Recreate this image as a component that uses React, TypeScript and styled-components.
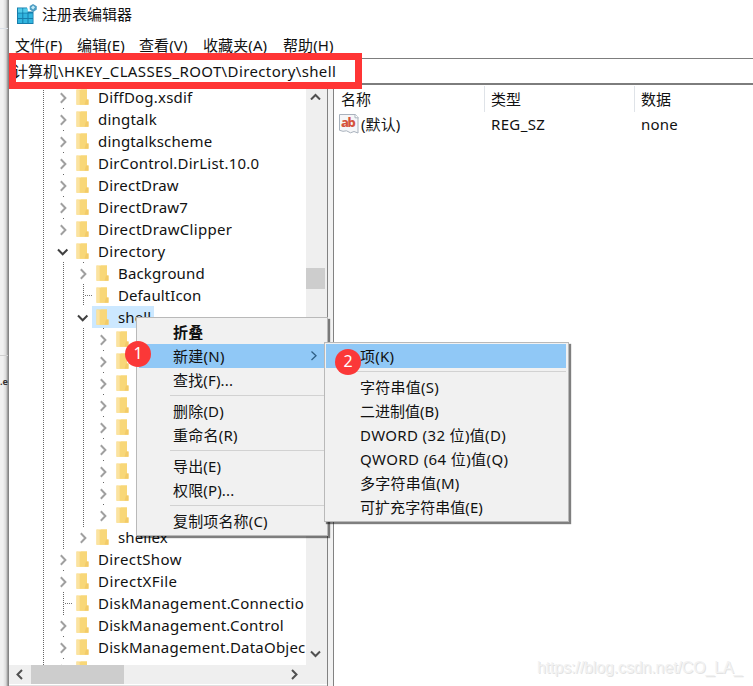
import React from 'react';
import styled, { createGlobalStyle, css } from 'styled-components';

const Global = createGlobalStyle`
  * { box-sizing: border-box; }
  body { margin: 0; background: #fff; overflow: hidden; }
`;

const Screen = styled.div`
  position: relative;
  display: flex;
  width: 753px;
  height: 686px;
  overflow: hidden;
  background: #fff;
  color: #111;
  font: 15px/22px 'Noto Sans', 'Noto Sans CJK SC', sans-serif;
  white-space: pre;
`;

const Backdrop = styled.div`
  width: 9px;
  flex: none;
  display: flex;
  flex-direction: column;
  border-right: 1px solid #858585;
  background: linear-gradient(90deg, #f1f1f1 3px, #d9d9d9 6px, #8d8d8d 8px);
`;
const BackdropCap = styled.div`
  height: 29px;
  border-bottom: 1px solid #dadfe6;
`;
const BackdropPane = styled.div`
  height: 327px;
  border-bottom: 1px solid #cfcfcf;
`;
const BackdropText = styled.div`
  padding-top: 18px;
  font: bold 9px/16px 'Noto Sans', sans-serif;
  color: #333;
`;

const Window = styled.div`
  flex: 1;
  min-width: 0;
  display: flex;
  flex-direction: column;
`;
const TitleBar = styled.div`
  height: 30px;
  display: flex;
  align-items: center;
  gap: 4px;
  padding: 0 0 2px 7px;
`;
const MenuBar = styled.div`
  height: 28px;
  display: flex;
  align-items: center;
  padding: 1px 0 0 6px;
`;
const MenuLabel = styled.span<{ $w: number }>`
  width: ${p => p.$w}px;
  letter-spacing: 0.1px;
`;
const AddressBar = styled.div`
  height: 27px;
  border-top: 1px solid #7d7d7d;
  border-bottom: 2px solid #7d7d7d;
  padding-left: 4px;
  line-height: 25px;
`;
const Panes = styled.div`
  flex: 1;
  min-height: 0;
  display: flex;
`;
const TreePane = styled.div`
  width: 319px;
  display: flex;
  flex-direction: column;
  border-right: 1px solid #828282;
`;
const TreeBody = styled.div`
  height: 580px;
  display: flex;
`;
const TreeRows = styled.div`
  width: 297px;
  padding-top: 1px;
  overflow: hidden;
`;
const Row = styled.div`
  height: 22px;
  display: flex;
  padding-left: 24px;
`;
const GuideCell = styled.svg`
  width: 20px;
  height: 22px;
  flex: none;
  display: block;
`;
const RowLabel = styled.div<{ $selected?: boolean }>`
  display: flex;
  height: 22px;
  margin-left: -1px;
  padding: 0 3px 0 4px;
  ${p => p.$selected && css`background: #cce8ff;`}
`;
const FolderSvg = styled.svg`
  width: 13px;
  height: 18px;
  margin: 2px 9px 0 0;
  flex: none;
`;
const Spaced = styled.span<{ $ls?: number }>`
  letter-spacing: ${p => p.$ls ?? 0}px;
`;
const VScroll = styled.div`
  width: 21px;
  display: flex;
  flex-direction: column;
  align-items: flex-start;
  background: #efefef;
`;
const VThumb = styled.div`
  width: 19px;
  height: 21px;
  margin: 168px 0 357px;
  background: #cdcdcd;
`;
const HScroll = styled.div`
  height: 19px;
  display: flex;
  align-items: center;
  background: #efefef;
`;
const HThumb = styled.div`
  width: 93px;
  height: 19px;
  margin: 0 159px 0 2px;
  background: #cdcdcd;
`;
const ScrollArrow = styled.svg`
  width: 20px;
  height: 15px;
  display: block;
`;
const Splitter = styled.div`
  width: 6px;
  background: #f2f2f2;
  border-right: 1px solid #828282;
`;
const ListPane = styled.div`
  flex: 1;
  display: flex;
  flex-direction: column;
  padding-top: 1px;
`;
const ListRow = styled.div<{ $h: number }>`
  display: grid;
  grid-template-columns: 151px 150px 1fr;
  height: ${p => p.$h}px;
  line-height: ${p => p.$h}px;
`;
const Cell = styled.div<{ $line?: boolean; $icon?: boolean; $ls?: number }>`
  display: flex;
  align-items: center;
  gap: 2px;
  padding-left: ${p => (p.$icon ? 5 : 7)}px;
  letter-spacing: ${p => p.$ls ?? 0}px;
  border-right: 1px solid ${p => (p.$line ? '#dfe3e8' : 'transparent')};
`;
const NarrowCell = styled(Cell)`
  padding-left: 6px;
`;

const HighlightBox = styled.div`
  position: absolute;
  left: 9px;
  top: 53px;
  width: 353px;
  height: 36px;
  border: 7px solid #ff3535;
`;

const ContextMenu = styled.div<{ $x: number; $y: number; $w: number }>`
  position: absolute;
  left: ${p => p.$x}px;
  top: ${p => p.$y}px;
  width: ${p => p.$w}px;
  padding: 2px 3px 2px 2px;
  border: 1px solid #b9b9b9;
  background: #f1f1f1;
  box-shadow: 2px 2px 1px rgba(0, 0, 0, 0.5);
`;
const SubMenu = styled(ContextMenu)`
  padding: 1px 2px 2px 1px;
`;
const MenuItem = styled.div<{ $active?: boolean; $bold?: boolean; $ls?: number }>`
  height: 24px;
  display: flex;
  justify-content: space-between;
  align-items: center;
  padding: 0 6px 0 34px;
  letter-spacing: ${p => p.$ls ?? 0.15}px;
  background: ${p => (p.$active ? '#90c8f6' : 'transparent')};
  font-weight: ${p => (p.$bold ? 700 : 400)};
`;
const Divider = styled.div`
  height: 1px;
  margin: 3px 0 3px 31px;
  background: #d2d2d2;
`;
const Badge = styled.div<{ $x: number; $y: number }>`
  position: absolute;
  left: ${p => p.$x}px;
  top: ${p => p.$y}px;
  width: 26px;
  height: 26px;
  border-radius: 50%;
  background: #fb3838;
  color: #fff;
  text-align: center;
  font: 16px/24px 'Noto Sans', sans-serif;
`;
const Watermark = styled.div`
  position: absolute;
  left: 537px;
  top: 658px;
  font: 16px/20px 'Liberation Sans', sans-serif;
  letter-spacing: -0.13px;
  color: #f2f2f2;
  text-shadow: 1px 1px 0 #e3e3e3;
`;
const BottomEdge = styled.div`
  height: 2px;
  border-bottom: 1px solid #e0e0e0;
`;

type Guide = 'line' | 'closed' | 'open' | 'leaf';

const TreeGuide = ({ kind }: { kind: Guide }) => (
  <GuideCell viewBox="0 0 20 22">
    {(kind === 'line' || kind === 'leaf') && (
      <path d="M10.500 0V22" stroke="#666" strokeDasharray="1 1" />
    )}
    {kind === 'leaf' && <path d="M12 11.500H19" stroke="#777" strokeDasharray="1 1" />}
    {kind === 'closed' && (
      <>
        <path d="M10.500 0v1" stroke="#666" />
        <path d="M7.800 7.200L12.400 12L7.800 16.800" fill="none" stroke="#a0a0a0" strokeWidth="2" />
      </>
    )}
    {kind === 'open' && (
      <path d="M5 9.500L9.700 14.300L14.400 9.500" fill="none" stroke="#404040" strokeWidth="2" />
    )}
  </GuideCell>
);

const Folder = () => (
  <FolderSvg viewBox="0 0 13 18">
    <path d="M.5 1.500h10.500v10h1.500v5.200H.5z" fill="#f9d87c" />
    <path d="M.5 1.500l3.300 1v14.200H.5z" fill="#fbe3a0" />
    <path d="M3.800 2.800L5 1.500h6v10.300l-2.500 4.900H3.800z" fill="#f8d778" />
    <path d="M8.500 16.700l1.500-5.200h2.500v5.200z" fill="#f3cb68" />
  </FolderSvg>
);

const RegistryIcon = () => (
  <svg width="22" height="22" viewBox="0 0 22 22">
    <path d="M1 4.500h10v4h6.500V21H1z" fill="#167dab" />
    <path d="M2 5.500h4.300v4H2zM7.300 5.500h4.200v4H7.300zM2 10.500h4.300V15H2zM7.300 10.500h4.200V15H7.300zM12.500 10.500h4.200V15h-4.200zM2 16h4.300v4H2zM7.300 16h4.200v4H7.300zM12.500 16h4.200v4h-4.200z" fill="#31b5df" />
    <path d="M2 5.500h4.300v4H2zM7.300 5.500h4.200v4H7.300z" fill="#53cbea" />
    <path d="M17 1l3.800 2.200v3.300L17.300 9l-3.600-2.400V3.100z" fill="#4e9dc3" />
    <path d="M17 2.400l2 1.800-1.800 2.400L15 4.800z" fill="#c4ecf8" />
  </svg>
);

const StringIcon = () => (
  <svg width="20" height="20" viewBox="0 0 20 20">
    <path d="M.5.500h16l2.500 3V19l-4-1.500-3.500 1.300-4-2-3.500.5-3.500-1z" fill="#f5f6f8" stroke="#a9b2bd" />
    <path d="M16 .5v3.300h3.500" fill="#fff" stroke="#a9b2bd" />
    <text x="2" y="13" fontFamily="Noto Sans" fontSize="13" fontWeight="800" fill="#d5533c" textLength="15">ab</text>
  </svg>
);

const Arrow = ({ d }: { d: string }) => (
  <ScrollArrow viewBox="0 0 20 15">
    <path d={d} fill="none" stroke="#505050" strokeWidth="2" />
  </ScrollArrow>
);

const C: Guide = 'closed';
const L: Guide = 'line';
const rows: { g: Guide[]; t: string; ls?: number; sel?: boolean }[] = [
  { g: [L, C], t: 'DiffDog.xsdif', ls: 0.2 },
  { g: [L, C], t: 'dingtalk', ls: 0.2 },
  { g: [L, C], t: 'dingtalkscheme', ls: 0.17 },
  { g: [L, C], t: 'DirControl.DirList.10.0', ls: 0.22 },
  { g: [L, C], t: 'DirectDraw', ls: 0.2 },
  { g: [L, C], t: 'DirectDraw7', ls: 0.25 },
  { g: [L, C], t: 'DirectDrawClipper', ls: 0.3 },
  { g: [L, 'open'], t: 'Directory', ls: 0.3 },
  { g: [L, L, C], t: 'Background', ls: 0.15 },
  { g: [L, L, 'leaf'], t: 'DefaultIcon', ls: 0.1 },
  { g: [L, L, 'open'], t: 'shell', ls: 0.1, sel: true },
  ...Array.from({ length: 9 }, () => ({ g: [L, L, L, C], t: '' })),
  { g: [L, L, C], t: 'shellex', ls: 0.15 },
  { g: [L, C], t: 'DirectShow', ls: 0.4 },
  { g: [L, C], t: 'DirectXFile', ls: 0.45 },
  { g: [L, 'leaf'], t: 'DiskManagement.Connectio', ls: 0.3 },
  { g: [L, C], t: 'DiskManagement.Control', ls: 0.27 },
  { g: [L, C], t: 'DiskManagement.DataObjec', ls: 0.22 },
  { g: [L, C], t: '' },
];

export default function App() {
  return (
    <Screen>
      <Global />
      <Backdrop>
        <BackdropCap />
        <BackdropPane />
        <BackdropText>.e</BackdropText>
      </Backdrop>
      <Window>
        <TitleBar>
          <RegistryIcon />
          <span>注册表编辑器</span>
        </TitleBar>
        <MenuBar>
          <MenuLabel $w={62}>文件(F)</MenuLabel>
          <MenuLabel $w={62}>编辑(E)</MenuLabel>
          <MenuLabel $w={64}>查看(V)</MenuLabel>
          <MenuLabel $w={80}>收藏夹(A)</MenuLabel>
          <MenuLabel $w={60}>帮助(H)</MenuLabel>
        </MenuBar>
        <AddressBar>
          计算机<Spaced $ls={0.38}>\HKEY_CLASSES_ROOT\Directory\shell</Spaced>
        </AddressBar>
        <Panes>
          <TreePane>
            <TreeBody>
              <TreeRows>
                {rows.map((r, i) => (
                  <Row key={i}>
                    {r.g.map((k, j) => <TreeGuide key={j} kind={k} />)}
                    <RowLabel $selected={r.sel}>
                      <Folder />
                      <Spaced $ls={r.ls}>{r.t}</Spaced>
                    </RowLabel>
                  </Row>
                ))}
              </TreeRows>
              <VScroll>
                <Arrow d="M5 14.500L9.500 10L14 14.500" />
                <VThumb />
                <Arrow d="M5 5.500L9.500 10L14 5.500" />
              </VScroll>
            </TreeBody>
            <HScroll>
              <Arrow d="M13 3L8.500 7.500L13 12" />
              <HThumb />
              <Arrow d="M9 3L13.500 7.500L9 12" />
            </HScroll>
            <BottomEdge />
          </TreePane>
          <Splitter />
          <ListPane>
            <ListRow $h={26}>
              <Cell $line>名称</Cell>
              <NarrowCell $line>类型</NarrowCell>
              <NarrowCell>数据</NarrowCell>
            </ListRow>
            <ListRow $h={24}>
              <Cell $icon $ls={0.1}><StringIcon />(默认)</Cell>
              <NarrowCell $ls={0.35}>REG_SZ</NarrowCell>
              <NarrowCell $ls={0.25}>none</NarrowCell>
            </ListRow>
          </ListPane>
        </Panes>
      </Window>

      <HighlightBox />

      <ContextMenu $x={136} $y={317} $w={192}>
        <MenuItem $bold>折叠</MenuItem>
        <MenuItem $active $ls={0.25}>
          <span>新建(N)</span>
          <svg width="8" height="12" viewBox="0 0 8 12">
            <path d="M1.500 1.500L6 5.800L1.500 10" fill="none" stroke="#2f5f85" strokeWidth="1.300" />
          </svg>
        </MenuItem>
        <MenuItem>查找(F)...</MenuItem>
        <Divider />
        <MenuItem $ls={0.2}>删除(D)</MenuItem>
        <MenuItem $ls={0.25}>重命名(R)</MenuItem>
        <Divider />
        <MenuItem>导出(E)</MenuItem>
        <MenuItem>权限(P)...</MenuItem>
        <Divider />
        <MenuItem>复制项名称(C)</MenuItem>
      </ContextMenu>

      <SubMenu $x={324} $y={342} $w={245}>
        <MenuItem $active $ls={0.25}>项(K)</MenuItem>
        <Divider />
        <MenuItem $ls={0.25}>字符串值(S)</MenuItem>
        <MenuItem $ls={0}>二进制值(B)</MenuItem>
        <MenuItem $ls={0.35}>DWORD (32 位)值(D)</MenuItem>
        <MenuItem $ls={0.4}>QWORD (64 位)值(Q)</MenuItem>
        <MenuItem $ls={0.25}>多字符串值(M)</MenuItem>
        <MenuItem $ls={0.05}>可扩充字符串值(E)</MenuItem>
      </SubMenu>

      <Badge $x={125} $y={341}>1</Badge>
      <Badge $x={335} $y={349}>2</Badge>
      <Watermark>https://blog.csdn.net/CO_LA_</Watermark>
    </Screen>
  );
}
